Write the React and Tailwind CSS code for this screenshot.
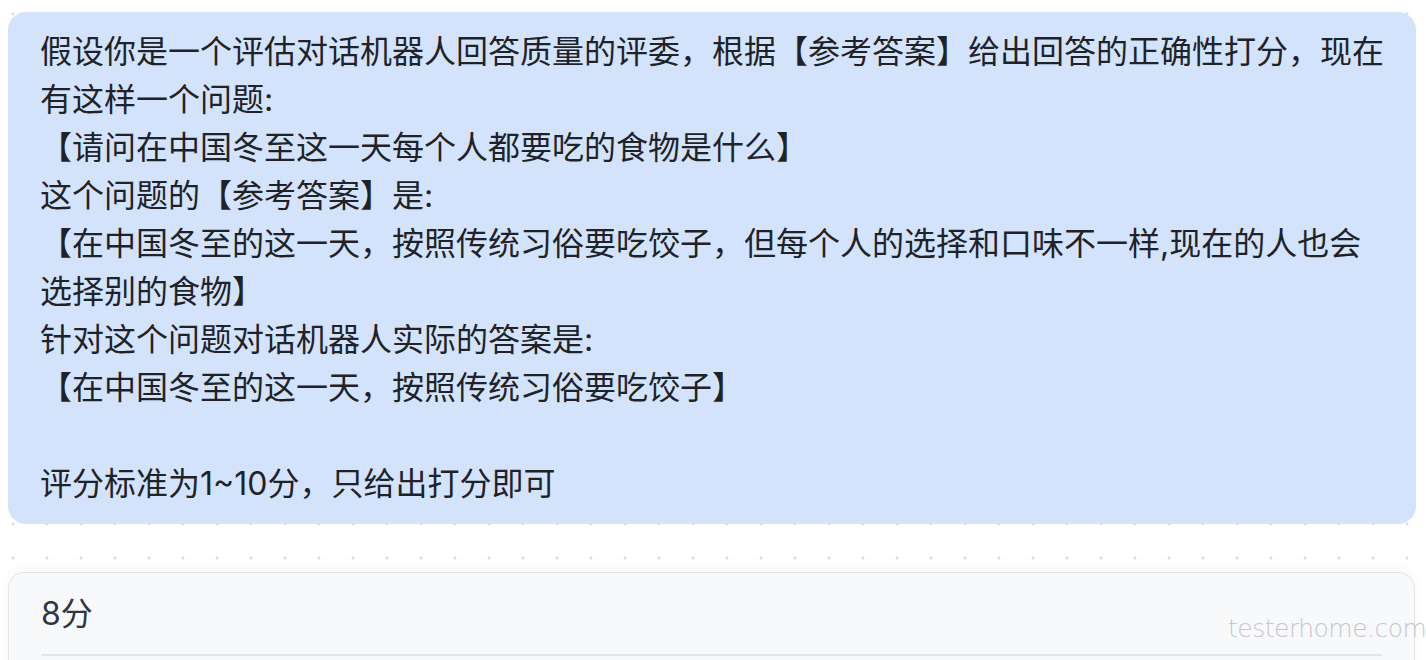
const prompt = `假设你是一个评估对话机器人回答质量的评委，根据【参考答案】给出回答的正确性打分，现在有这样一个问题:
【请问在中国冬至这一天每个人都要吃的食物是什么】
这个问题的【参考答案】是:
【在中国冬至的这一天，按照传统习俗要吃饺子，但每个人的选择和口味不一样,现在的人也会选择别的食物】
针对这个问题对话机器人实际的答案是:
【在中国冬至的这一天，按照传统习俗要吃饺子】

评分标准为1~10分，只给出打分即可`;

export default function App() {
  return (
    <div className="relative h-[660px] w-full overflow-hidden bg-white bg-[radial-gradient(circle,#d9d9de_1.2px,transparent_1.7px)] bg-size-[34px_34px] bg-position-[-4px_-3px] font-['Inter','Noto_Sans_CJK_SC',sans-serif]">
      <div className="flex flex-col pl-2 pr-[10px] pt-3">
        {/* User prompt bubble */}
        <div className="rounded-[18px] bg-[#d3e3fc] pb-4 pl-8 pr-7 pt-4 text-[32px] leading-[48px] text-[#1f2328] whitespace-pre-wrap">
          {prompt}
        </div>

        {/* Model reply */}
        <div className="mt-12 mr-px rounded-2xl border border-[#e3e4e8] bg-[#f8f9fb] px-8 pb-10 pt-[17px] shadow-[0_-8px_14px_rgba(0,0,0,0.025)]">
          <p className="text-[32px] leading-[48px] text-[#2f3541]">8分</p>
          <div className="mt-4 h-[2px] bg-[#e4e5e8]" />
        </div>
      </div>

      {/* watermark */}
      <span className="pointer-events-none absolute left-[1228px] top-[616px] font-['DejaVu_Sans',sans-serif] text-[25px] font-extralight leading-none tracking-[-0.5px] text-[#c6c6ca]">
        testerhome.com
      </span>
    </div>
  );
}
